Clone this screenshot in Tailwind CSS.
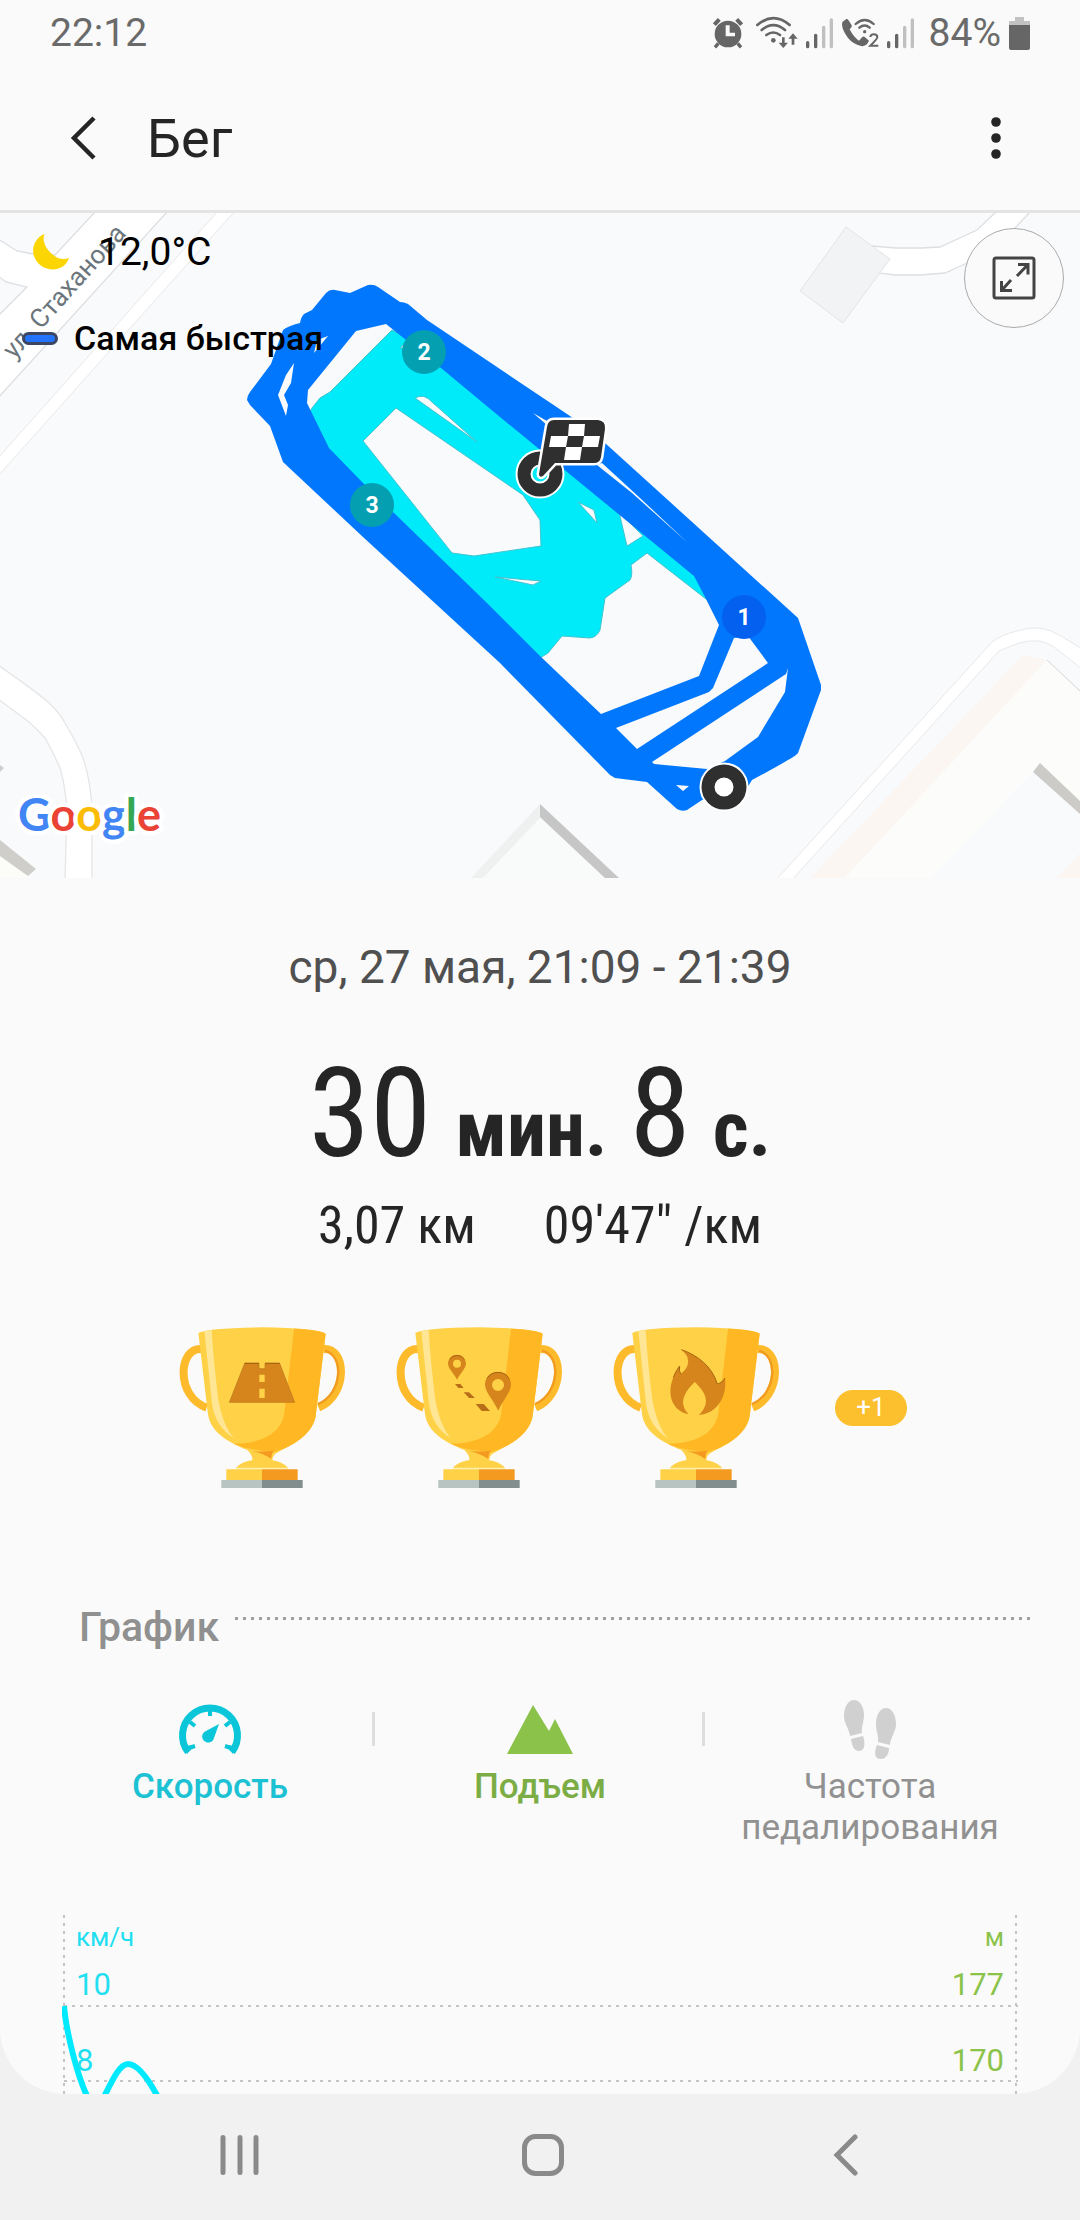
<!DOCTYPE html>
<html lang="ru">
<head>
<meta charset="utf-8">
<meta name="viewport" content="width=device-width, initial-scale=1">
<title>Бег</title>
<script src="https://cdn.jsdelivr.net/npm/@tailwindcss/browser@4"></script>
</head>
<body class="flex min-h-screen flex-col bg-[#f1f1f1] font-[Roboto,sans-serif] text-[#252525]">
<div class="flex-1 overflow-hidden rounded-b-[66px] bg-[#fafafa]">

  <!-- Status bar -->
  <div class="flex h-[66px] items-center justify-between pr-[50px] pl-[50px] text-[39px] text-[#6a6a6a]">
    <span>22:12</span>
    <div class="flex items-center">
      <svg class="h-[34px] w-[34px]" viewBox="93 44 102 102" fill="#666"><circle cx="144" cy="98" r="40"/><path d="M103 70 118 54M185 70 170 54" stroke="#666" stroke-width="12"/><path d="M115 126 105 138M173 126 183 138" stroke="#666" stroke-width="10"/><path d="M137 72h12v22h16v11h-28z" fill="#fafafa"/></svg>
      <svg class="ml-[10px] h-[34px] w-[44px]" viewBox="228 42 132 102" fill="none" stroke="#666" stroke-width="8" stroke-linecap="round"><path d="M235 69Q283 28 332 69M248 84Q283 55 318 84M262 99Q283 84 303 99"/><circle cx="283" cy="115" r="7" fill="#666" stroke="none"/><path d="M313 106v20M342 128v-20" stroke-linecap="butt"/><path d="M299 122h28l-14 16zM328 110h28l-14-16z" fill="#666" stroke="none"/></svg>
      <svg class="ml-[6px] h-[34px] w-[29px]" viewBox="378 42 87 102" stroke-width="10" stroke-linecap="round"><path d="M386 122v12M410 100v34" stroke="#666"/><path d="M434 76v58M457 54v80" stroke="#c0c0c0"/></svg>
      <svg class="ml-[7px] h-[34px] w-[38px]" viewBox="484 42 114 102" fill="#666"><path d="M488 60 500 51Q504 50 506 54L516 70Q518 74 510 82Q522 106 538 116L548 105Q552 102 556 106L568 116 562 127Q554 134 544 132Q520 126 505 108Q488 84 487 68Z"/><path d="M528 66Q555 42 582 66M539 77Q555 64 570 77" fill="none" stroke="#666" stroke-width="7" stroke-linecap="round"/><circle cx="555" cy="89" r="5"/><path d="M572 105Q573 97 582 97Q593 97 593 106Q593 111 572 131H596" fill="none" stroke="#666" stroke-width="6"/></svg>
      <svg class="ml-[7px] h-[34px] w-[29px]" viewBox="618 42 87 102" stroke-width="10" stroke-linecap="round"><path d="M626 122v12M650 100v34" stroke="#666"/><path d="M674 76v58M697 54v80" stroke="#c0c0c0"/></svg>
      <span class="ml-[14px]">84%</span>
      <svg class="ml-2 h-[34px] w-[21px]" viewBox="0 0 21 34"><path d="M6 1h9v4h6v6H0V5h6z" fill="#c2c2c2"/><path d="M0 9h21v23q0 2-2 2H2q-2 0-2-2z" fill="#666"/></svg>
    </div>
  </div>

  <!-- App bar -->
  <header class="flex h-[147px] items-center border-b-[3px] border-[#e4e4e4] pr-[56px] pl-[59px]">
    <button aria-label="Назад" class="flex h-[60px] w-[48px] items-center justify-center"><svg class="h-[44px] w-[26px]" viewBox="0 0 26 44" fill="none" stroke="#252525" stroke-width="4.5"><path d="M24 2 4 22l20 20"/></svg></button>
    <h1 class="ml-10 flex-1 text-[54px]">Бег</h1>
    <button aria-label="Меню" class="flex h-[60px] w-[56px] items-center justify-center"><svg class="h-[42px] w-[10px]" viewBox="0 0 10 42" fill="#252525"><circle cx="5" cy="5" r="4.8"/><circle cx="5" cy="21" r="4.8"/><circle cx="5" cy="37" r="4.8"/></svg></button>
  </header>

  <!-- Map -->
  <section class="relative h-[665px] overflow-hidden bg-[#f8fafc]">
    <svg class="absolute inset-0 h-full w-full" viewBox="0 213 1080 665" preserveAspectRatio="xMidYMid slice">
      <!-- roads -->
      <g fill="#fff" stroke="#dddfe2" stroke-width="1.3">
        <path d="M95 212H167L-2 398V316L27 287 6 282-2 276V239L17 251 33 254 55 255Z"/>
        <path d="M217 212H234L-2 476V458Z" stroke="#e8e8e8" stroke-width="1"/>
        <path d="M872 246 895 248H922L940 247 977 230 996 212H1030L1015 228Q990 255 967 263L945 273 920 275H895L878 273Z"/>
        <path d="M-2 665Q38 693 48 702 60 713 65 723 78 745 83 758 90 778 92 807V881H65L67 807Q64 780 60 768 52 750 45 738 38 730 29 722L-2 699Z" stroke="#e6e6e6"/>
        <path d="M775 881 992 642Q1003 634 1017 631 1028 627 1039 628 1050 629 1061 636L1082 649V669L1054 647Q1046 642 1039 641 1028 640 1019 643L999 651 791 881Z" stroke="#e8e8e8" stroke-width="1"/>
      </g>
      <!-- buildings -->
      <path d="M846 227 890 259 843 323 800 291Z" fill="#f1f3f4" stroke="#e2e4e7"/>
      <path d="M0 857 28 876V879H0Z" fill="#fcfcf8"/><path d="M0 840 36 869 28 876 0 856ZM0 765 4 768 0 772Z" fill="#d0ceca"/>
      <path d="M540 812 607 879H476Z" fill="#f9fbfa"/><path d="M540 804V818L482 879H470Z" fill="#eff1f0"/><path d="M540 804 620 879H606L540 817Z" fill="#c6c6c6"/>
      <path d="M809 879 1023 655 1047 660 844 879Z" fill="#fcf6f3"/>
      <path d="M844 879 1047 660 1080 691V805L1033 772 930 879Z" fill="#fcfdfa"/><path d="M1047 660 1080 691" stroke="#d5d5d5"/>
      <path d="M1040 763 1080 801V814L1033 772Z" fill="#cdcbc8"/><path d="M1056 879 1080 853V879Z" fill="#fcf6f3"/>
      <text transform="translate(14 360) rotate(-48)" font-size="26" fill="#6b757c">ул. Стаханова</text>
      <!-- slow part of the route -->
      <path fill="#00ebfa" stroke="#3fc4d0" stroke-width="1" fill-rule="evenodd" d="M392 330 330 392 320 398 312 408 300 430 520 668 540 658 548 653 562 636 590 638Q597 637 600 630L605 598 630 580Q633 575 631 565L647 553 715 606 700 570 500 400 430 350ZM396 408 363 441 452 553 474 556 541 546 540 520 523 495ZM415 398Q424 393 432 402L477 442ZM495 577 541 581 533 585ZM578 502 594 510 597 523ZM400 348 406 342 410 348ZM619 512 627 546 643 536Z"/>
      <!-- fast part of the route -->
      <path fill="#0177fe" fill-rule="evenodd" d="M247 400Q247 396 250 392L271 364 283 330Q288 326 300 323 301 317 304 314L312 310 326 293Q330 289 335 290L350 293 368 285Q374 284 378 287L400 302Q404 302 408 304L427 320 570 416 605 443 798 618 821 685V690L798 753Q797 756 752 780L747 788 702 800 687 810Q682 812 677 809L647 782 615 778 610 775 500 663 363 537 283 462 270 426 250 405ZM386 324 356 331 308 390 307 403 329 448 363 483 487 603 540 656 601 714 699 676 719 625 705 597 694 576 500 417 441 368ZM734 638 713 688 709 692 616 728 637 749 768 663 748 636ZM788 668 786 674 652 762 654 764 707 769 725 761 758 737 785 692ZM676 785 689 786 683 791ZM597 465 602 463 640 498 688 543 632 493ZM533 413 547 421V425ZM294 363 286 375 278 395 286 416 288 405 284 395 291 383ZM328 336 317 340 314 353Z"/>
      <!-- kilometre markers -->
      <g font-size="23" font-weight="700" fill="#fff" text-anchor="middle">
        <circle cx="424" cy="352" r="22" fill="#049fb1"/><text x="424" y="360">2</text>
        <circle cx="372" cy="505" r="22" fill="#049fb1"/><text x="372" y="513">3</text>
        <circle cx="744" cy="617" r="22" fill="#0460ee"/><text x="744" y="625">1</text>
      </g>
      <!-- start and finish -->
      <circle cx="724" cy="787" r="24.500" fill="#fff"/><circle cx="724" cy="787" r="16" fill="none" stroke="#2f2f2f" stroke-width="13"/>
      <circle cx="540" cy="474" r="16" fill="none" stroke="#fff" stroke-width="17"/><circle cx="540" cy="474" r="16" fill="none" stroke="#2f2f2f" stroke-width="13"/>
      <path d="M554 420H598Q606 421 605 429L601 457Q600 463 594 463H555L543 476Q539 478 539 474L547 427Q548 420 554 420Z" fill="#2f2f2f" stroke="#fff" stroke-width="5" paint-order="stroke"/>
      <path fill="#fff" d="M569 424H585L584 436H568ZM551 436H568L566 447H549ZM584 436H600L598 447H582ZM566 447H582L580 460H564Z"/>
      <!-- map attribution -->
      <text x="18" y="831" font-family="Lato, sans-serif" font-size="45" font-weight="700" stroke="#fff" stroke-width="9" stroke-linejoin="round" paint-order="stroke"><tspan fill="#4285f4">G</tspan><tspan fill="#ea4335">o</tspan><tspan fill="#fbbc05">o</tspan><tspan fill="#4285f4">g</tspan><tspan fill="#34a853">l</tspan><tspan fill="#ea4335">e</tspan></text>
    </svg>
    <div class="relative flex items-start justify-between pt-[15px] pr-4 pl-[22px] text-black">
      <div>
        <div class="flex h-12 items-center text-[39px]">
          <svg class="ml-[10px] h-[38px] w-[38px]" viewBox="32 235.500 38 38"><path d="M44.500 236.500C35 240 32 250 33.500 257 36 267 45 272 53 272 61 272 67 267 69 260.500 64 262.500 58 262 52 256.500 45 250 42 243 44.500 236.500Z" fill="#fbd504"/></svg>
          <span class="ml-[28px]">12,0°C</span>
        </div>
        <div class="mt-[38px] flex h-12 items-center text-[34px] font-medium">
          <span class="h-[13px] w-9 rounded-full border-[3px] border-[#3c4660] bg-[#2473fb]"></span>
          <span class="ml-4">Самая быстрая</span>
        </div>
      </div>
      <button aria-label="На весь экран" class="flex size-[100px] items-center justify-center rounded-full border border-[#aaa] bg-[#fafafa]">
        <svg class="size-[44px]" viewBox="0 0 44 44" fill="none" stroke="#444" stroke-width="3"><rect x="2" y="2" width="40" height="40" rx="2"/><path d="M26 8.500H36V18.500M36 8.500 25 20M19 24 9.500 34.500M9.500 25V34.500H20"/></svg>
      </button>
    </div>
  </section>

  <!-- Summary -->
  <section class="flex flex-col items-center pt-[61px]">
    <p class="text-[46px] leading-[56px] text-[#505050]">ср, 27 мая, 21:09 - 21:39</p>
    <p class="mt-[59px] flex items-baseline font-['Roboto_Condensed','Liberation_Sans_Narrow',Roboto,sans-serif] text-[124px] leading-[120px]">
      <span>30</span><span class="ml-6 text-[78px] leading-[80px] font-bold">мин.</span><span class="ml-[22px]">8</span><span class="ml-[22px] text-[78px] leading-[80px] font-bold">с.</span>
    </p>
    <p class="mt-5 flex gap-[68px] font-['Roboto_Condensed','Liberation_Sans_Narrow',Roboto,sans-serif] text-[52px] leading-[64px]"><span>3,07 км</span><span>09'47" /км</span></p>

    <div class="mt-[69px] flex items-center gap-[51px] pl-[6px]">
      <svg class="h-[161px] w-[166px]" viewBox="57 81 498 483">
        <defs><g id="cup">
          <path d="M126 147C54 140 46 290 140 323M489 147C560 140 566 285 476 323" fill="none" stroke="#fdbb2c" stroke-width="24"/>
          <path d="M495 152C552 165 550 280 474 312" fill="none" stroke="#f19b20" stroke-width="7"/>
          <path d="M115 99Q140 84 306 82 470 84 497 101L468 340C464 400 400 432 345 462Q334 474 338 486H276Q282 470 262 450C190 420 148 390 143 335Z" fill="#ffd147"/>
          <path d="M402 86Q480 90 497 101L468 340C464 400 400 440 345 455 300 454 250 445 222 431 320 430 370 390 374 330Z" fill="#ffb724"/>
          <path d="M275 453Q305 456 342 452 334 460 334 477 310 460 275 453Z" fill="#f49a20"/>
          <path d="M133 93 155 90Q160 180 175 300 190 380 222 415 165 380 156 310Z" fill="#ffe695"/>
          <path d="M228 504Q245 480 306 477 366 480 384 504Z" fill="#ffd147"/>
          <path d="M228 503H384V508H228Z" fill="#fff0a8"/>
          <path d="M199 508H306V540H199Z" fill="#ffd147"/><path d="M306 508H413V540H306Z" fill="#f49a20"/>
          <path d="M184 540H306V564H184Z" fill="#b8c4c2"/><path d="M306 540H428V564H306Z" fill="#828e8d"/>
        </g></defs>
        <use href="#cup"/>
        <path d="M254 190H297V206H315V190H359L404 307H208Z" fill="#d6851d" stroke="#b8771d" stroke-width="2"/><path d="M254 190H297M315 190H359" stroke="#a86510" stroke-width="4"/>
        <path d="M298 224H314V246H298ZM298 266H314V294H298Z" fill="#ffd147"/>
      </svg>
      <svg class="h-[161px] w-[166px]" viewBox="57 81 498 483"><use href="#cup"/>
        <g fill="#d6851d"><path fill-rule="evenodd" d="M240 165C220 165 213 180 213 192 214 206 232 222 240 239 248 222 266 206 267 192 267 180 260 165 240 165ZM240 179A12 12 0 1 1 240 203 12 12 0 1 1 240 179Z"/><path fill-rule="evenodd" d="M363 216C335 216 324 238 324 254 326 280 350 300 364 332 378 300 400 280 402 254 402 238 391 216 363 216ZM363 237A18 18 0 1 1 363 273 18 18 0 1 1 363 237Z"/></g>
        <path d="M234 252H250L260 264H244ZM260 277H276L294 294H276ZM296 312H320L339 333H314Z" fill="#b96f18"/>
        <path d="M218 178Q226 166 240 166 254 166 262 178M330 236Q340 217 363 217 386 217 396 236" fill="none" stroke="#a86510" stroke-width="3"/>
      </svg>
      <svg class="h-[161px] w-[166px]" viewBox="57 81 498 483"><use href="#cup"/>
        <path d="M262 149C310 165 355 200 370 252 380 250 388 242 393 234 400 290 370 340 315 345 350 310 338 280 302 246 262 285 258 315 284 343 240 335 215 290 238 232Q248 208 257 198 254 212 260 222 290 200 280 170 274 158 262 149Z" fill="#d6851d"/><path d="M262 149C310 165 355 200 370 252 380 250 388 242 393 234M238 232Q248 208 257 198 254 212 260 222" fill="none" stroke="#a86510" stroke-width="3"/>
      </svg>
      <button class="ml-[5px] flex h-9 w-[72px] items-center justify-center rounded-full bg-[#fcc02e] text-[26px] text-white">+1</button>
    </div>
  </section>

  <!-- Chart section -->
  <section class="mt-[115px]">
    <div class="flex items-start pr-[49px] pl-[79px]">
      <h2 class="text-[41px] leading-[48px] font-medium text-[#909090]">График</h2>
      <svg class="mt-[14px] ml-4 h-[3px] flex-1"><line x1="0" y1="1.500" x2="100%" y2="1.500" stroke="#a0a0a0" stroke-width="3" stroke-dasharray="3 5"/></svg>
    </div>
    <div class="mt-[49px] grid grid-cols-3 px-[45px] text-[35px] leading-[41px]">
      <button class="relative flex flex-col items-center text-[#1cc2d3]">
        <svg class="h-[60px] w-[66px]" viewBox="0 0 66 60"><path d="M11 52A27.500 27.500 0 1 1 55 52" fill="none" stroke="#0bc6d9" stroke-width="7"/><path d="M7 46 10 54 18 45M59 46 56 54 48 45" fill="#0bc6d9"/><path d="M33 8V16M13 22 18 26M53 22 48 26M12 48 18 46M54 48 48 46" stroke="#0bc6d9" stroke-width="4"/><path d="M42 24 37 38A6 6 0 1 1 29 31Z" fill="#0bc6d9"/></svg>
        <span class="mt-[6px] font-medium">Скорость</span>
        <span class="absolute top-[12px] right-0 h-[34px] w-[3px] bg-[#dedede]"></span>
      </button>
      <button class="relative flex flex-col items-center text-[#7cad45]">
        <svg class="h-[60px] w-[66px]" viewBox="0 0 66 60"><path d="M0 54 26 5 42 31 48 19 66 54Z" fill="#8bc34a"/></svg>
        <span class="mt-[6px] font-medium">Подъем</span>
        <span class="absolute top-[12px] right-0 h-[34px] w-[3px] bg-[#dedede]"></span>
      </button>
      <button class="flex flex-col items-center text-[#919191]">
        <svg class="h-[60px] w-[52px]" viewBox="0 0 52 60" fill="#d0d0d0"><path d="M10 0C4 0 0 7 0 16 0 24 5 28 6 36L18 33C17 28 20 22 20 15 20 7 16 0 10 0ZM7 39 19 36C21 41 22 51 15 51 10 51 8 46 7 39Z"/><path d="M42 8C36 8 32 15 32 24 32 32 35 36 34 42L46 45C46 38 52 32 52 24 52 15 48 8 42 8ZM33 45 45 48C45 54 42 59 37 59 30 59 30 52 33 45Z"/></svg>
        <span class="mt-[6px]">Частота<br>педалирования</span>
      </button>
    </div>

    <div class="relative mx-[62px] mt-[67px] h-[179px] overflow-hidden">
      <svg class="absolute inset-0 h-full w-full" fill="none">
        <g stroke="#c4c4c4" stroke-width="2">
          <line x1="2" y1="0" x2="2" y2="100%" stroke-dasharray="3 5"/>
          <svg x="100%" overflow="visible"><line x1="-2" y1="0" x2="-2" y2="179" stroke-dasharray="3 5"/></svg>
          <line x1="2" y1="91" x2="100%" y2="91" stroke-dasharray="3 5"/>
          <line x1="2" y1="166" x2="100%" y2="166" stroke-dasharray="3 5"/>
        </g>
        <path d="M2 91C4 115 15 162 27 185M41 184C49 168 57 149 66 149 76 149 87 165 97 184" stroke="#00eaff" stroke-width="6"/>
      </svg>
      <div class="relative flex justify-between px-[14px] pt-[6px] text-[31px] leading-[40px]">
        <div class="text-[#21dff0]"><p class="text-[26px] leading-[32px]">км/ч</p><p class="mt-3">10</p><p class="mt-9">8</p></div>
        <div class="text-right text-[#8bc34a]"><p class="text-[26px] leading-[32px]">м</p><p class="mt-3">177</p><p class="mt-9">170</p></div>
      </div>
    </div>
  </section>
</div>

<!-- System navigation -->
<nav class="grid h-[126px] grid-cols-3 items-center pr-[83px] pb-[4px] pl-[89px]">
  <button aria-label="Недавние" class="flex justify-center"><svg class="h-[42px] w-[42px]" viewBox="0 0 42 42" stroke="#8a8a8a" stroke-width="5" stroke-linecap="round"><path d="M4 3.500V38.500M21 3.500V38.500M37 3.500V38.500"/></svg></button>
  <button aria-label="Домой" class="flex justify-center"><svg class="h-[42px] w-[42px]" viewBox="0 0 42 42" fill="none" stroke="#8a8a8a" stroke-width="5"><rect x="2.500" y="2.500" width="37" height="37" rx="11"/></svg></button>
  <button aria-label="Назад" class="flex justify-center"><svg class="h-[42px] w-[26px]" viewBox="0 0 26 42" fill="none" stroke="#8a8a8a" stroke-width="5" stroke-linecap="round"><path d="M22 3 4 21 22 39"/></svg></button>
</nav>
</body>
</html>
